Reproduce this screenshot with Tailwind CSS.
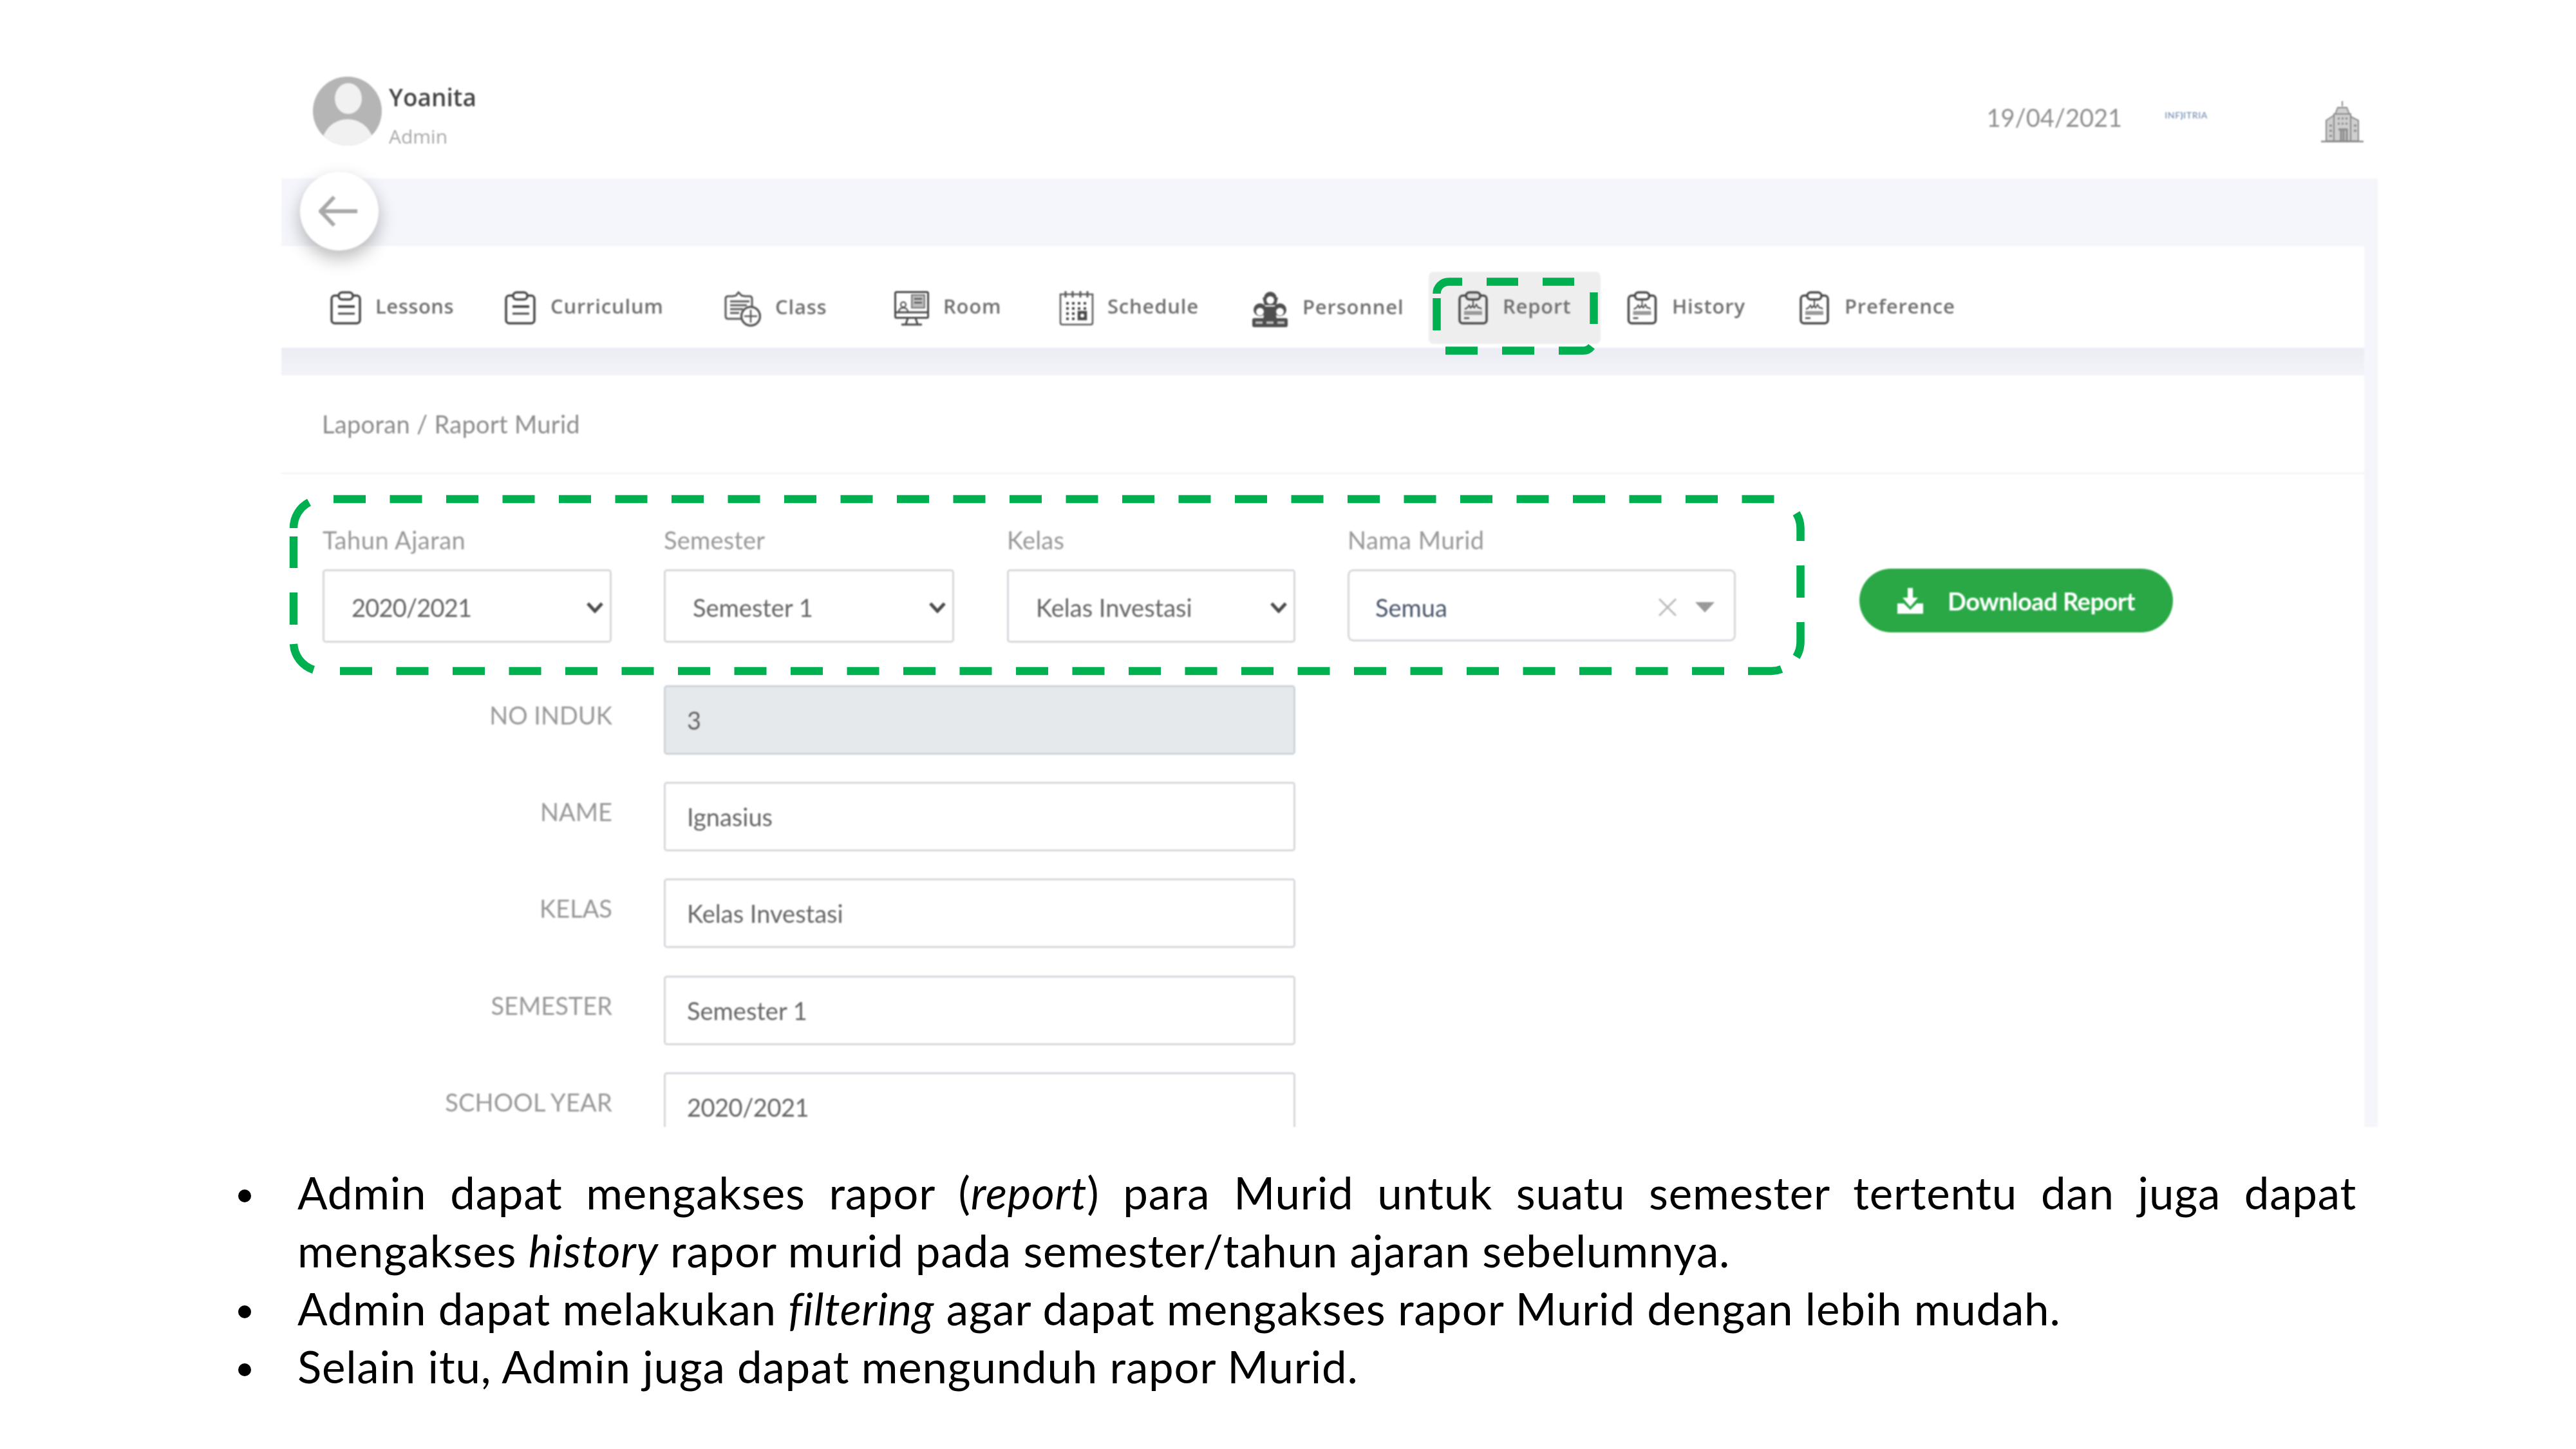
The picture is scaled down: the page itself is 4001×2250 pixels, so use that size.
<!DOCTYPE html>
<html>
<head>
<meta charset="utf-8">
<script src="https://cdn.jsdelivr.net/npm/@tailwindcss/browser@4"></script>
</head>
<body class="bg-white">
<div class="relative w-[4001px] h-[2250px] overflow-hidden bg-white font-['Lato',sans-serif]">

  <!-- app screenshot -->
  <div class="relative ml-[437px] w-[3256px] h-[1750px] overflow-hidden flex flex-col blur-[0.9px]">
    <!-- header -->
    <div class="h-[277px] flex items-start shrink-0">
      <svg class="ml-[49px] mt-[119px] w-[107px] h-[107px] shrink-0" viewBox="0 0 107 107"><defs><clipPath id="av"><circle cx="53.5" cy="53.5" r="53.5"/></clipPath></defs><g clip-path="url(#av)"><rect width="107" height="107" fill="#b5b5b5"/><ellipse cx="55" cy="34" rx="21" ry="24" fill="#f1f1f1"/><ellipse cx="54" cy="105" rx="40" ry="39" fill="#f1f1f1"/></g></svg>
      <div class="ml-[11px] mt-[126px] flex flex-col font-['Open_Sans',sans-serif]">
        <span class="text-[37px] leading-[50px] font-semibold text-[#444]">Yoanita</span>
        <span class="text-[30px] leading-[40px] text-[#a8a8a8] mt-[16px]">Admin</span>
      </div>
      <div class="ml-auto flex items-start">
        <span class="mt-[158px] text-[38px] leading-[48px] text-[#8f8f8f]">19/04/2021</span>
        <span class="ml-[66px] mt-[171px] text-[14px] leading-[16px] tracking-[0.6px] text-[#7d93b5] font-semibold">INF<span class="text-[#3f6fb0]">)</span>ITRIA</span>
        <svg class="ml-[175px] mr-[21px] mt-[157px] w-[68px] h-[64px]" viewBox="0 0 66 64" fill="#cfcfcf" stroke="#8a8a8a" stroke-width="2"><path d="M33 0v8M22 20l4-10h14l4 10zM20 62V20h26v42zM8 62V30l12-8v40zM46 24l12 6v32H46z"/><path d="M0 63h66" stroke-width="3"/><path d="M26 27h3M32 27h3M38 27h3M26 35h3M32 35h3M38 35h3M13 38h4M13 46h4M13 54h4M51 38h4M51 46h4M27 44h13v18M31 44v18M35 44v18" stroke-width="3"/></svg>
      </div>
    </div>
    <!-- grey band -->
    <div class="h-[105px] bg-[#f5f6fb] shrink-0"></div>

    <div class="flex flex-1 min-h-0">
      <div class="w-[3235px] flex flex-col">
        <!-- nav -->
        <div class="h-[158px] shrink-0 bg-white pl-[76px] pt-[70px] flex items-start font-['Open_Sans',sans-serif] font-semibold text-[#707070] text-[31px] leading-[47px] tracking-[0.8px]">
          <div class="w-[271px] flex">
            <svg class="w-[48px] h-[52px] shrink-0" viewBox="0 0 48 52" fill="none" stroke="#4a4a4a" stroke-width="3.5"><rect x="2" y="7" width="44" height="43" rx="5"/><rect x="13" y="2" width="22" height="11" rx="5.5" fill="#fff"/><path d="M12 24h26" stroke-width="4"/><path d="M12 35h26" stroke-width="3"/></svg>
            <span class="ml-[22px] tracking-[0.5px]">Lessons</span>
          </div>
          <div class="w-[341px] flex">
            <svg class="w-[48px] h-[52px] shrink-0" viewBox="0 0 48 52" fill="none" stroke="#4a4a4a" stroke-width="3.5"><rect x="2" y="7" width="44" height="43" rx="5"/><rect x="13" y="2" width="22" height="11" rx="5.5" fill="#fff"/><path d="M12 24h26" stroke-width="4"/><path d="M12 35h26" stroke-width="3"/></svg>
            <span class="ml-[23px]">Curriculum</span>
          </div>
          <div class="w-[264px] flex">
            <svg class="w-[57px] h-[56px] shrink-0" viewBox="0 0 57 56" fill="none" stroke="#5a5a5a" stroke-width="3"><path d="M30 43H6q-4 0-4-4V12q0-4 4-4h7l5-1 4-5 5 5 5 1h7q4 0 4 4v11"/><path d="M9 16h30M9 22h26M9 28h20M9 34h14" stroke-width="3"/><circle cx="41" cy="39" r="14.5" fill="#fff" stroke-width="3.5"/><path d="M41 29v20M31 39h20" stroke-width="2.5"/></svg>
            <span class="ml-[22px] mt-[1px]">Class</span>
          </div>
          <div class="w-[256px] flex">
            <svg class="w-[54px] h-[54px] shrink-0" viewBox="0 0 54 54" fill="none" stroke="#4a4a4a" stroke-width="3"><rect x="1.5" y="1.5" width="51" height="40" rx="2"/><path d="M2 33h50M21 42l-3 9M33 42l3 9M11 52h32"/><rect x="27" y="6" width="20" height="20" fill="#bbb" stroke="#777" stroke-width="2"/><path d="M31 12h12M31 18h12" stroke-width="2"/><circle cx="14" cy="21" r="4" stroke-width="2"/><path d="M7 33q0-7 7-7t7 7" stroke-width="2"/></svg>
            <span class="ml-[22px]">Room</span>
          </div>
          <div class="w-[300px] flex">
            <svg class="w-[54px] h-[54px] shrink-0" viewBox="0 0 54 54" fill="none" stroke="#5a5a5a" stroke-width="2.5"><path d="M2 5h50v44q0 3-3 3H5q-3 0-3-3z"/><path d="M10 0v10M21 0v10M33 0v10M44 0v10" stroke-width="3"/><path d="M11 19h4M20 19h4M29 19h4M38 19h4M11 27h4M20 27h4M29 27h4M38 27h4M11 35h4M20 35h4M11 43h4M20 43h4" stroke-width="4" stroke="#4a4a4a"/><rect x="30" y="32" width="12" height="12" fill="#4a4a4a" stroke="#4a4a4a"/><circle cx="36" cy="38" r="3" fill="#fff" stroke="none"/></svg>
            <span class="ml-[21px]">Schedule</span>
          </div>
          <div class="w-[320px] flex">
            <svg class="w-[55px] h-[56px] shrink-0" viewBox="0 0 55 56" fill="#4f4f4f"><circle cx="28" cy="11" r="10"/><path d="M16 10h24l-3 12H19z"/><circle cx="28" cy="14" r="6" fill="#fff"/><circle cx="12" cy="29" r="10"/><circle cx="12" cy="32" r="6" fill="#fff"/><circle cx="43" cy="29" r="10"/><circle cx="43" cy="32" r="6" fill="#fff"/><path d="M20 24h15l3 20H17z"/><rect x="0" y="42" width="55" height="14" rx="3"/><path d="M5 47h11v4H5zM22 47h11v4H22zM39 47h11v4H39z" fill="#bbb"/></svg>
            <span class="ml-[23px] mt-[1px]">Personnel</span>
          </div>
          <div class="relative w-[262px] flex">
            <div class="absolute left-[-46px] top-[-30px] w-[267px] h-[112px] rounded-[8px] bg-[#eeeeee]"></div>
            <svg class="relative w-[46px] h-[52px] shrink-0" viewBox="0 0 46 52" fill="none" stroke="#4a4a4a" stroke-width="3.5"><rect x="2" y="7" width="42" height="43" rx="5"/><rect x="12" y="2" width="22" height="11" rx="5.5" fill="#ddd"/><path d="M23 13v10" stroke-width="2"/><path d="M10 28l4-2 3-4 2 4 3-3 3 3 3-5 3 5 3 0 2 2" stroke-width="2"/><rect x="9" y="31" width="28" height="6" fill="#999" stroke="none"/><path d="M9 42h8" stroke-width="2.5"/></svg>
            <span class="relative ml-[23px]">Report</span>
          </div>
          <div class="w-[267px] flex">
            <svg class="w-[47px] h-[52px] shrink-0" viewBox="0 0 46 52" fill="none" stroke="#4a4a4a" stroke-width="3.5"><rect x="2" y="7" width="42" height="43" rx="5"/><rect x="12" y="2" width="22" height="11" rx="5.5" fill="#fff"/><path d="M23 13v10" stroke-width="2"/><path d="M10 28l4-2 3-4 2 4 3-3 3 3 3-5 3 5 3 0 2 2" stroke-width="2"/><rect x="9" y="31" width="28" height="6" fill="#999" stroke="none"/><path d="M9 42h8" stroke-width="2.5"/></svg>
            <span class="ml-[23px]">History</span>
          </div>
          <div class="flex">
            <svg class="w-[48px] h-[52px] shrink-0" viewBox="0 0 46 52" fill="none" stroke="#4a4a4a" stroke-width="3.5"><rect x="2" y="7" width="42" height="43" rx="5"/><rect x="12" y="2" width="22" height="11" rx="5.5" fill="#fff"/><path d="M23 13v10" stroke-width="2"/><path d="M10 28l4-2 3-4 2 4 3-3 3 3 3-5 3 5 3 0 2 2" stroke-width="2"/><rect x="9" y="31" width="28" height="6" fill="#999" stroke="none"/><path d="M9 42h8" stroke-width="2.5"/></svg>
            <span class="ml-[23px]">Preference</span>
          </div>
        </div>
        <!-- shadow band -->
        <div class="h-[43px] shrink-0 bg-linear-to-b from-[#ecedf4] to-[#f3f4fa]"></div>
        <!-- panel -->
        <div class="flex-1 bg-white text-[38px] leading-[50px]">
          <div class="h-[153px] pl-[63px] pt-[50px] border-b-2 border-[#f1f1f1] text-[#8c8c8c] tracking-[0.3px]">Laporan / Raport Murid</div>
          <!-- filters -->
          <div class="flex items-start pl-[64px] mt-[77px]">
            <div class="w-[449px]">
              <div class="text-[#999] mb-[21px] tracking-[0.5px]">Tahun Ajaran</div>
              <div class="h-[114px] border-[3px] border-[#d6d8dc] rounded-[5px] flex items-center pl-[42px] pr-[10px] pt-[4px] text-[#666]"><span class="tracking-[-0.8px]">2020/2021</span><svg class="ml-auto w-[26px] h-[18px]" viewBox="0 0 26 18" fill="none" stroke="#4a4a4a" stroke-width="5"><path d="M2 3l11 12L24 3"/></svg></div>
            </div>
            <div class="w-[451px] ml-[81px]">
              <div class="text-[#999] mb-[21px] tracking-[0.2px]">Semester</div>
              <div class="h-[114px] border-[3px] border-[#d6d8dc] rounded-[5px] flex items-center pl-[42px] pr-[10px] pt-[4px] text-[#666]"><span>Semester 1</span><svg class="ml-auto w-[26px] h-[18px]" viewBox="0 0 26 18" fill="none" stroke="#4a4a4a" stroke-width="5"><path d="M2 3l11 12L24 3"/></svg></div>
            </div>
            <div class="w-[448px] ml-[82px]">
              <div class="text-[#999] mb-[21px] tracking-[0.2px]">Kelas</div>
              <div class="h-[114px] border-[3px] border-[#d6d8dc] rounded-[5px] flex items-center pl-[42px] pr-[10px] pt-[4px] text-[#666]"><span>Kelas Investasi</span><svg class="ml-auto w-[26px] h-[18px]" viewBox="0 0 26 18" fill="none" stroke="#4a4a4a" stroke-width="5"><path d="M2 3l11 12L24 3"/></svg></div>
            </div>
            <div class="w-[603px] ml-[81px]">
              <div class="text-[#999] mb-[21px] tracking-[0.5px]">Nama Murid</div>
              <div class="h-[112px] border-[3px] border-[#d6d8dc] rounded-[9px] flex items-center pl-[40px] pt-[5px] text-[#4b586c]"><span>Semua</span>
                <svg class="ml-auto w-[30px] h-[30px]" viewBox="0 0 30 30" fill="none" stroke="#bbb" stroke-width="3"><path d="M2 2l26 26M28 2L2 28"/></svg>
                <svg class="ml-[28px] mr-[30px] w-[30px] h-[16px]" viewBox="0 0 30 16" fill="#9a9a9a"><path d="M0 0h30L15 16z"/></svg>
              </div>
            </div>
            <div class="ml-[192px] mt-[70px] w-[487px] h-[99px] rounded-full bg-[#2aa846] flex items-center pl-[59px] text-white">
              <svg class="w-[40px] h-[40px] shrink-0" viewBox="0 0 40 40" fill="#fff"><path d="M16 0h8v15h8L20 29 8 15h8z"/><path d="M0 24h10l10 10 10-10h10v16H0z"/></svg>
              <span class="ml-[38px] tracking-[-0.5px] font-bold">Download Report</span>
            </div>
          </div>
          <!-- form rows -->
          <div class="mt-[66px] pl-[63px] flex flex-col gap-[42.2px] text-[#999]">
            <div class="flex"><div class="w-[451px] text-right mt-[21px]">NO INDUK</div><div class="ml-[80px] w-[981px] h-[108px] border-[3px] border-[#ced4da] rounded-[5px] bg-[#e6e9ec] flex items-center pl-[33px] text-[#666]">3</div></div>
            <div class="flex"><div class="w-[451px] text-right mt-[21px]">NAME</div><div class="ml-[80px] w-[981px] h-[108px] border-[3px] border-[#d6d8dc] rounded-[5px] flex items-center pl-[33px] text-[#666]">Ignasius</div></div>
            <div class="flex"><div class="w-[451px] text-right mt-[21px]">KELAS</div><div class="ml-[80px] w-[981px] h-[108px] border-[3px] border-[#d6d8dc] rounded-[5px] flex items-center pl-[33px] text-[#666]">Kelas Investasi</div></div>
            <div class="flex"><div class="w-[451px] text-right mt-[21px]">SEMESTER</div><div class="ml-[80px] w-[981px] h-[108px] border-[3px] border-[#d6d8dc] rounded-[5px] flex items-center pl-[33px] text-[#666]">Semester 1</div></div>
            <div class="flex"><div class="w-[451px] text-right mt-[21px] tracking-[0.2px]">SCHOOL YEAR</div><div class="ml-[80px] w-[981px] h-[108px] border-[3px] border-[#d6d8dc] rounded-[5px] flex items-center pl-[33px] text-[#666]"><span class="tracking-[-0.5px]">2020/2021</span></div></div>
          </div>
        </div>
      </div>
      <div class="flex-1 bg-[#f5f6fb]"></div>
    </div>

    <!-- back button -->
    <div class="absolute left-[29px] top-[267px] w-[122px] h-[122px] rounded-full bg-white shadow-[0_12px_28px_rgba(0,0,0,0.28)] flex items-center justify-center">
      <svg class="w-[60px] h-[48px] mr-[4px]" viewBox="0 0 60 48" fill="none" stroke="#a8a8a8" stroke-width="6"><path d="M60 24H4M24 2L3 24l21 22"/></svg>
    </div>
  </div>

  <!-- bullets -->
  <ul class="w-[3290px] ml-[370px] mt-[57px] text-[69px] leading-[90px] text-black tracking-[0.8px]">
    <li class="flex"><span class="w-[20px] h-[20px] mt-[40px] rounded-full bg-black shrink-0"></span><p class="ml-[72px] w-[3208px] text-justify">Admin dapat mengakses rapor (<em>report</em>) para Murid untuk suatu semester tertentu dan juga dapat mengakses <em>history</em> rapor murid pada semester/tahun ajaran sebelumnya.</p></li>
    <li class="flex"><span class="w-[20px] h-[20px] mt-[40px] rounded-full bg-black shrink-0"></span><p class="ml-[72px] w-[3208px]">Admin dapat melakukan <em>filtering</em> agar dapat mengakses rapor Murid dengan lebih mudah.</p></li>
    <li class="flex"><span class="w-[20px] h-[20px] mt-[40px] rounded-full bg-black shrink-0"></span><p class="ml-[72px] w-[3208px]">Selain itu, Admin juga dapat mengunduh rapor Murid.</p></li>
  </ul>

  <!-- green dashed annotations -->
  <svg class="absolute left-0 top-0 w-[4001px] h-[2250px] pointer-events-none" viewBox="0 0 4001 2250" fill="none" stroke="#00b050" stroke-width="12.5">
    <path d="M518 775H2755.5M528 1042H2678" stroke-dasharray="50 37.5"/>
    <path d="M456 820A45 45 0 0 1 480 780M456 833V882M456 920V970M456 1000A45 45 0 0 0 487 1040"/>
    <path d="M2796.5 840V820A45 45 0 0 0 2790 797M2796.5 878V928M2796.5 966V997A45 45 0 0 1 2790 1020M2715 1042H2751.5A45 45 0 0 0 2767 1039"/>
    <path d="M2231.5 456A18.5 18.5 0 0 1 2250 437.5H2271M2231.5 463V513M2309 437.5H2358M2396 437.5H2445M2475.5 454V503M2245 544.5H2295M2333 544.5H2383M2421 544.5H2459A16 16 0 0 0 2472 538"/>
  </svg>
</div>
</body>
</html>
